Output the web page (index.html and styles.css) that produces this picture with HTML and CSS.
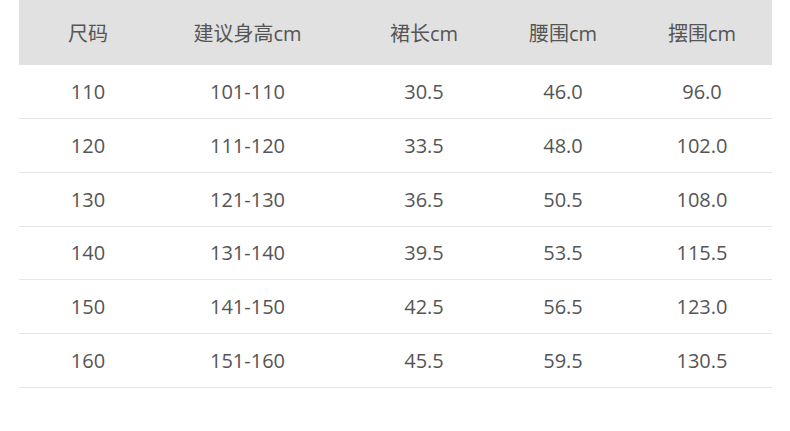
FILE: index.html
```html
<!DOCTYPE html>
<html lang="zh">
<head>
<meta charset="utf-8">
<link rel="stylesheet" href="styles.css">
</head>
<body>
<div class="page">
  <div class="table">
    <div class="row head">
      <div class="cell c1">尺码</div>
      <div class="cell c2">建议身高cm</div>
      <div class="cell c3">裙长cm</div>
      <div class="cell c4">腰围cm</div>
      <div class="cell c5">摆围cm</div>
    </div>
    <div class="row">
      <div class="cell c1">110</div><div class="cell c2">101-110</div><div class="cell c3">30.5</div><div class="cell c4">46.0</div><div class="cell c5">96.0</div>
    </div>
    <div class="row">
      <div class="cell c1">120</div><div class="cell c2">111-120</div><div class="cell c3">33.5</div><div class="cell c4">48.0</div><div class="cell c5">102.0</div>
    </div>
    <div class="row">
      <div class="cell c1">130</div><div class="cell c2">121-130</div><div class="cell c3">36.5</div><div class="cell c4">50.5</div><div class="cell c5">108.0</div>
    </div>
    <div class="row">
      <div class="cell c1">140</div><div class="cell c2">131-140</div><div class="cell c3">39.5</div><div class="cell c4">53.5</div><div class="cell c5">115.5</div>
    </div>
    <div class="row">
      <div class="cell c1">150</div><div class="cell c2">141-150</div><div class="cell c3">42.5</div><div class="cell c4">56.5</div><div class="cell c5">123.0</div>
    </div>
    <div class="row">
      <div class="cell c1">160</div><div class="cell c2">151-160</div><div class="cell c3">45.5</div><div class="cell c4">59.5</div><div class="cell c5">130.5</div>
    </div>
  </div>
</div>
</body>
</html>
```

FILE: styles.css
```css
html, body {
  margin: 0;
  padding: 0;
  background: #ffffff;
}
.page {
  padding-left: 19px;
  font-family: "Open Sans", "Noto Sans CJK SC", sans-serif;
  color: #555555;
  font-size: 20px;
}
.table {
  width: 753px;
}
.row {
  display: grid;
  grid-template-columns: 138px 197px 140px 138px 140px;
  height: 52.85px;
  align-items: center;
  border-bottom: 1px solid #e6e6e6;
}
.row.head {
  height: 65px;
  background: #e1e1e1;
  border-bottom: none;
}
.cell {
  text-align: center;
}
.c2 {
  padding-right: 16px;
}
```
